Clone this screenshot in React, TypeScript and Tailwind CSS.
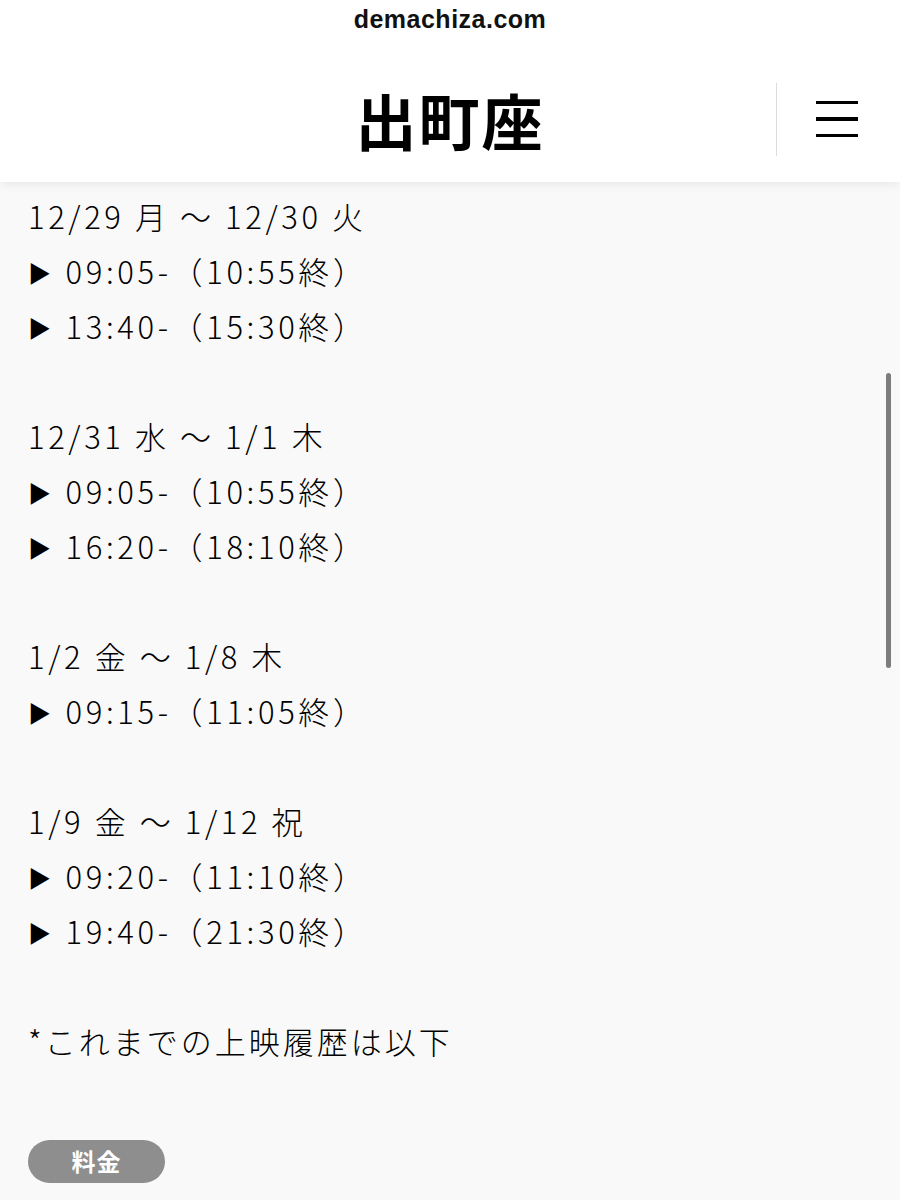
import React from "react";

const SCHEDULE = [
  { range: "12/29 月 〜 12/30 火", times: ["09:05-（10:55終）", "13:40-（15:30終）"] },
  { range: "12/31 水 〜 1/1 木", times: ["09:05-（10:55終）", "16:20-（18:10終）"] },
  { range: "1/2 金 〜 1/8 木", times: ["09:15-（11:05終）"] },
  { range: "1/9 金 〜 1/12 祝", times: ["09:20-（11:10終）", "19:40-（21:30終）"] },
];

const jp = { fontFamily: '"Noto Sans CJK JP", "Noto Sans", sans-serif' };

export default function App() {
  return (
    <div className="relative w-[900px] h-[1200px] overflow-hidden bg-[#f9f9f9] text-black" style={jp}>
      <header className="relative z-10 bg-white shadow-[0_2px_10px_rgba(0,0,0,0.08)]">
        <div className="h-[40px] flex items-center justify-center">
          <span className="text-[25px] font-bold tracking-[0.5px] text-[#111]" style={{ fontFamily: '"Liberation Sans", Arial, sans-serif' }}>
            demachiza.com
          </span>
        </div>
        <div className="h-[142px] pt-[16px] grid grid-cols-[1fr_auto_1fr] items-center">
          <div />
          <h1 className="text-[61px] font-bold leading-none tracking-[2px]">出町座</h1>
          <div className="flex items-center justify-end">
            <div className="w-px h-[73px] bg-[#dcdcdc] mr-[39px]" />
            <button className="w-[42px] mr-[42px] flex flex-col gap-[13px]">
              <span className="block h-[3.5px] bg-black" />
              <span className="block h-[3.5px] bg-black" />
              <span className="block h-[3.5px] bg-black" />
            </button>
          </div>
        </div>
      </header>

      <main className="px-[28px] pt-[6px] text-[31px] leading-[55px] font-light tracking-[3px]">
        {SCHEDULE.map((s) => (
          <div key={s.range} className="mb-[55px]">
            <p className="tracking-[3.6px]">{s.range}</p>
            {s.times.map((t) => (
              <p key={t} className="tracking-[3.6px]">
                <span className="inline-block text-[23px] leading-none mr-[11px] align-[2px]">▶</span>
                {t}
              </p>
            ))}
          </div>
        ))}
        <p>*これまでの上映履歴は以下</p>
        <div className="mt-[62px]">
          <span className="inline-flex items-center justify-center w-[137px] h-[43px] rounded-full bg-[#8e8e8e] text-white text-[24px] font-bold leading-none tracking-[1px]">
            料金
          </span>
        </div>
      </main>

      <div className="absolute right-[9px] top-[373px] w-[5px] h-[295px] rounded-full bg-[#7d7d7d]" />
    </div>
  );
}
